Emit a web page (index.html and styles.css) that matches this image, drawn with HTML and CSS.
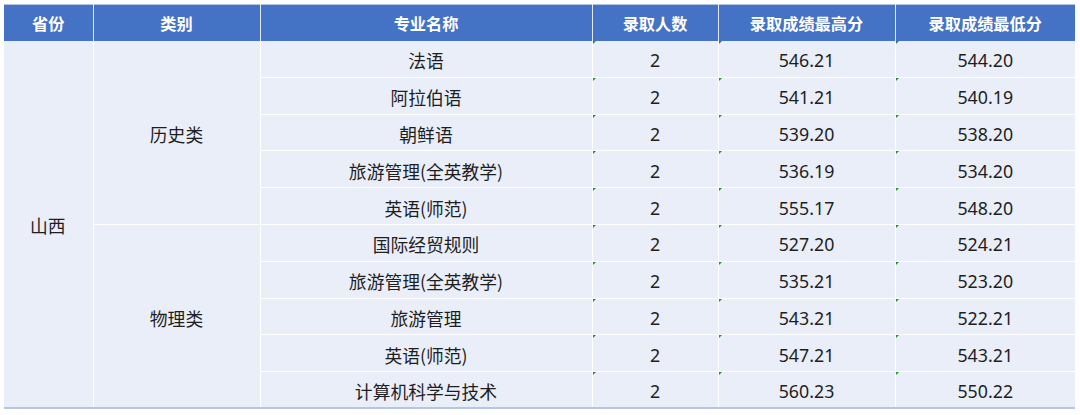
FILE: index.html
```html
<!DOCTYPE html>
<html lang="zh">
<head>
<meta charset="utf-8">
<link rel="stylesheet" href="styles.css">
</head>
<body>
<table class="score">
  <colgroup>
    <col class="c1"><col class="c2"><col class="c3"><col class="c4"><col class="c5"><col class="c6">
  </colgroup>
  <thead>
    <tr><th>省份</th><th>类别</th><th>专业名称</th><th>录取人数</th><th>录取成绩最高分</th><th>录取成绩最低分</th></tr>
  </thead>
  <tbody>
    <tr><td rowspan="10" class="prov">山西</td><td rowspan="5">历史类</td><td>法语</td><td class="n">2</td><td class="n">546.21</td><td class="n">544.20</td></tr>
    <tr><td>阿拉伯语</td><td class="n">2</td><td class="n">541.21</td><td class="n">540.19</td></tr>
    <tr><td>朝鲜语</td><td class="n">2</td><td class="n">539.20</td><td class="n">538.20</td></tr>
    <tr><td>旅游管理(全英教学)</td><td class="n">2</td><td class="n">536.19</td><td class="n">534.20</td></tr>
    <tr><td>英语(师范)</td><td class="n">2</td><td class="n">555.17</td><td class="n">548.20</td></tr>
    <tr><td rowspan="5">物理类</td><td>国际经贸规则</td><td class="n">2</td><td class="n">527.20</td><td class="n">524.21</td></tr>
    <tr><td>旅游管理(全英教学)</td><td class="n">2</td><td class="n">535.21</td><td class="n">523.20</td></tr>
    <tr><td>旅游管理</td><td class="n">2</td><td class="n">543.21</td><td class="n">522.21</td></tr>
    <tr><td>英语(师范)</td><td class="n">2</td><td class="n">547.21</td><td class="n">543.21</td></tr>
    <tr><td>计算机科学与技术</td><td class="n">2</td><td class="n">560.23</td><td class="n">550.22</td></tr>
  </tbody>
</table>
</body>
</html>
```
FILE: styles.css
```css
html, body {
  margin: 0;
  padding: 0;
  background: #ffffff;
}
body {
  padding: 4px 0 0 4px;
  font-family: "Noto Sans", "Noto Sans CJK SC", sans-serif;
  color: #1e1e1e;
}
.score {
  border-collapse: collapse;
  table-layout: fixed;
  width: 1071px;
  border-top: 1px solid #b4c6e7;
  border-bottom: 2px solid #b4c6e7;
}
.c1 { width: 89px; }
.c2 { width: 167px; }
.c3 { width: 332px; }
.c4 { width: 126px; }
.c5 { width: 177px; }
.c6 { width: 180px; }
.score thead tr { height: 36px; }
.score th {
  background: #4472c4;
  color: #ffffff;
  font-family: "Noto Sans CJK SC", sans-serif;
  font-weight: 700;
  font-size: 16.2px;
  line-height: 22px;
  padding: 0;
  border-left: 1.5px solid #e3e9f6;
  border-right: 1.5px solid #e3e9f6;
  border-top: none;
  border-bottom: none;
}
.score th:first-child { border-left: none; }
.score th:last-child { border-right: none; }
.score tbody tr { height: 36.8px; }
.score td {
  background: #e9eef9;
  padding: 3px 0 0 0;
  line-height: 24px;
  text-align: center;
  font-size: 17.8px;
  font-family: "Noto Sans CJK SC", sans-serif;
  border: 1.5px solid #ffffff;
  border-bottom-width: 1px;
  border-top-width: 1px;
}
.score tbody tr:first-child td { border-top: none; }
.score tbody tr:last-child td { border-bottom: none; }
.score td:last-child { border-right: none; }
.score td.prov {
  border-left: none;
  text-align: left;
  padding-left: 26px;
}
.score td.n {
  position: relative;
  font-family: "Noto Sans", "Noto Sans CJK SC", sans-serif;
  font-size: 17.8px;
}
.score td.n::before {
  content: "";
  position: absolute;
  left: 0;
  top: 0;
  width: 0;
  height: 0;
  border-top: 3px solid #2e8b2e;
  border-right: 3px solid transparent;
}
```
